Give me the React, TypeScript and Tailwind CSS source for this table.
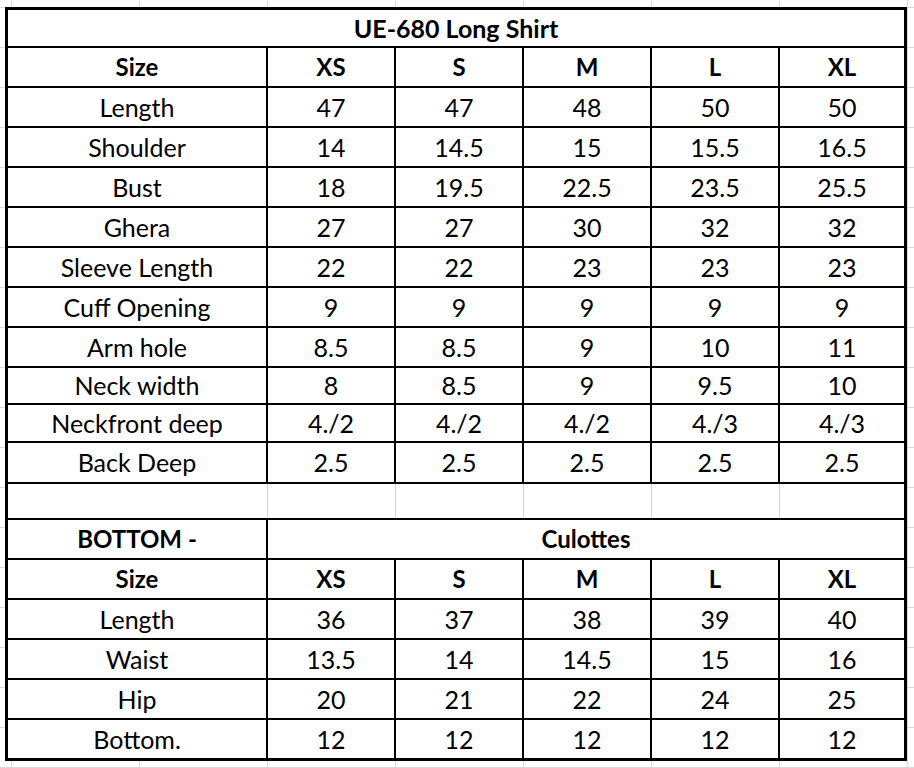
import React from 'react';

const sizes = ['XS', 'S', 'M', 'L', 'XL'];

// top table rows: label, values, row content height
const shirtRows: { label: string; values: string[]; h: string }[] = [
  { label: 'Length', values: ['47', '47', '48', '50', '50'], h: 'h-[38px]' },
  { label: 'Shoulder', values: ['14', '14.5', '15', '15.5', '16.5'], h: 'h-[38px]' },
  { label: 'Bust', values: ['18', '19.5', '22.5', '23.5', '25.5'], h: 'h-[38px]' },
  { label: 'Ghera', values: ['27', '27', '30', '32', '32'], h: 'h-[38px]' },
  { label: 'Sleeve Length', values: ['22', '22', '23', '23', '23'], h: 'h-[38px]' },
  { label: 'Cuff Opening', values: ['9', '9', '9', '9', '9'], h: 'h-[38px]' },
  { label: 'Arm hole', values: ['8.5', '8.5', '9', '10', '11'], h: 'h-[38px]' },
  { label: 'Neck width', values: ['8', '8.5', '9', '9.5', '10'], h: 'h-[35px]' },
  { label: 'Neckfront deep', values: ['4./2', '4./2', '4./2', '4./3', '4./3'], h: 'h-[36px]' },
  { label: 'Back Deep', values: ['2.5', '2.5', '2.5', '2.5', '2.5'], h: 'h-[39px]' },
];

const bottomRows = [
  { label: 'Length', values: ['36', '37', '38', '39', '40'] },
  { label: 'Waist', values: ['13.5', '14', '14.5', '15', '16'] },
  { label: 'Hip', values: ['20', '21', '22', '24', '25'] },
  { label: 'Bottom.', values: ['12', '12', '12', '12', '12'] },
];

function Cell({ children, bold, h = 'h-[38px]' }: { children?: React.ReactNode; bold?: boolean; h?: string }) {
  return (
    <div className={`bg-white flex items-center justify-center ${h} ${bold ? 'font-bold text-[24px]' : ''}`}>
      {children}
    </div>
  );
}

function Row({ label, values, bold, h }: { label: string; values: string[]; bold?: boolean; h?: string }) {
  return (
    <>
      <Cell bold={bold} h={h}>{label}</Cell>
      {values.map((v, i) => (
        <Cell key={i} bold={bold} h={h}>{v}</Cell>
      ))}
    </>
  );
}

export default function App() {
  return (
    <div className="w-full h-[768px] overflow-hidden bg-white bg-[linear-gradient(to_right,#d9d9d9_1px,transparent_1px),linear-gradient(to_bottom,#d9d9d9_1px,transparent_1px)] bg-[size:128px_40px] bg-[position:11px_7px] pt-[7px] pl-[5px]">
      <div
        className="w-[902px] border-[3px] border-black bg-black grid grid-cols-[258px_126px_126px_126px_126px_124px] gap-[2px] text-black text-[25px] leading-none"
        style={{ fontFamily: 'Lato, "Open Sans", sans-serif' }}
      >
        <div className="col-span-6 bg-white h-[36px] flex items-center justify-center font-bold">
          UE-680 Long Shirt
        </div>
        <Row label="Size" values={sizes} bold />
        {shirtRows.map((r) => (
          <Row key={r.label} label={r.label} values={r.values} h={r.h} />
        ))}

        {/* blank spreadsheet row */}
        <div className="col-span-6 bg-white h-[34px] grid grid-cols-[259px_128px_128px_128px_128px_125px]">
          <div />
          <div className="border-l border-[#d4d4d4]" />
          <div className="border-l border-[#d4d4d4]" />
          <div className="border-l border-[#d4d4d4]" />
          <div className="border-l border-[#d4d4d4]" />
          <div className="border-l border-[#d4d4d4]" />
        </div>

        <Cell bold>BOTTOM -</Cell>
        <div className="col-span-5 bg-white h-[38px] flex items-center justify-center font-bold text-[24px]">
          Culottes
        </div>
        <Row label="Size" values={sizes} bold />
        {bottomRows.map((r) => (
          <Row key={r.label} label={r.label} values={r.values} />
        ))}
      </div>
    </div>
  );
}
